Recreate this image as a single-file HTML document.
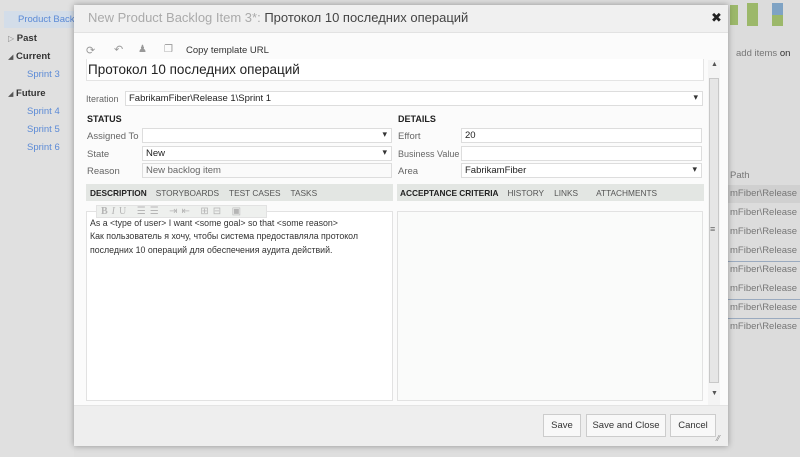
<!DOCTYPE html>
<html><head><meta charset="utf-8"><style>
*{box-sizing:border-box;margin:0;padding:0}
body{width:800px;height:457px;overflow:hidden;background:#dedede;font-family:"Liberation Sans","DejaVu Sans",sans-serif;font-size:9.5px;color:#222;position:relative}
div{white-space:nowrap}
.a{position:absolute}
.nav{color:#5b8ad6;font-size:9.5px}
.navh{font-weight:bold;color:#333;font-size:9.5px}
.rp{color:#777;font-size:9.5px;left:730px}
.lbl{color:#666;font-size:9.5px}
.box{position:absolute;border:1px solid #ddd;background:#fff;height:15px;font-size:9.5px;padding:1px 3px;color:#222}
.dd::after{content:"▾";position:absolute;right:4px;top:0px;font-size:9px;color:#333}
.tab{position:absolute;height:17px;background:#e3e6e3;font-size:8.3px;color:#555;padding:4px 4px}
.tab b{color:#222;margin-right:9px}
.tab span{margin-right:10px}
.btn{position:absolute;top:414px;height:23px;border:1px solid #ccc;background:#f8f8f8;font-size:9.5px;text-align:center;line-height:21px;color:#333}
</style></head><body>
<div class="a" style="left:0;top:0;width:74px;height:457px;background:#e0e0e0"></div>
<div class="a" style="left:4px;top:11px;width:72px;height:17px;background:#d3dde9"></div>
<div class="a nav" style="left:18px;top:14px">Product Backl</div>
<div class="a navh" style="left:8px;top:33px"><span style="color:#888;font-size:8px">▷</span> Past</div>
<div class="a navh" style="left:8px;top:51px"><span style="color:#555;font-size:7px">◢</span> Current</div>
<div class="a nav" style="left:27px;top:69px">Sprint 3</div>
<div class="a navh" style="left:8px;top:88px"><span style="color:#555;font-size:7px">◢</span> Future</div>
<div class="a nav" style="left:27px;top:106px">Sprint 4</div>
<div class="a nav" style="left:27px;top:124px">Sprint 5</div>
<div class="a nav" style="left:27px;top:142px">Sprint 6</div>
<div class="a" style="left:730px;top:0;width:70px;height:457px;background:#dcdcdc"></div>
<div class="a" style="left:730px;top:5px;width:8px;height:20px;background:#9cb86a"></div>
<div class="a" style="left:747px;top:3px;width:11px;height:23px;background:#9cb86a"></div>
<div class="a" style="left:772px;top:3px;width:11px;height:12px;background:#7fa3c4"></div>
<div class="a" style="left:772px;top:15px;width:11px;height:11px;background:#9cb86a"></div>
<div class="a" style="left:736px;top:48px;color:#777">add items <span style="color:#333">on</span></div>
<div class="a rp" style="top:170px">Path</div>
<div class="a" style="left:728px;top:185px;width:72px;height:18px;background:#d0d0d0"></div>
<div class="a rp" style="top:188px">mFiber\Release 1</div>
<div class="a rp" style="top:207px">mFiber\Release 1</div>
<div class="a rp" style="top:226px">mFiber\Release 1</div>
<div class="a rp" style="top:245px">mFiber\Release 1</div>
<div class="a" style="left:728px;top:261px;width:72px;height:1px;background:#9aaabf"></div>
<div class="a rp" style="top:264px">mFiber\Release 1</div>
<div class="a rp" style="top:283px">mFiber\Release 1</div>
<div class="a" style="left:728px;top:299px;width:72px;height:1px;background:#9aaabf"></div>
<div class="a rp" style="top:302px">mFiber\Release 1</div>
<div class="a" style="left:728px;top:318px;width:72px;height:1px;background:#9aaabf"></div>
<div class="a rp" style="top:321px">mFiber\Release 1</div>
<div class="a" style="left:74px;top:5px;width:654px;height:441px;background:#fbfbfb;box-shadow:0 0 6px rgba(0,0,0,.35)"></div>
<div class="a" style="left:74px;top:5px;width:654px;height:28px;background:#f0f0f0;border-bottom:1px solid #e2e2e2"></div>
<div class="a" style="left:88px;top:10px;font-size:13px;color:#aaa">New Product Backlog Item 3*: <span style="color:#444">Протокол 10 последних операций</span></div>
<div class="a" style="left:711px;top:10px;font-size:13px;font-weight:bold;color:#222">✖</div>
<div class="a" style="left:86px;top:44px;color:#999;font-size:11px">⟳</div>
<div class="a" style="left:114px;top:43px;color:#999;font-size:11px">↶</div>
<div class="a" style="left:138px;top:44px;color:#999;font-size:10px">♟</div>
<div class="a" style="left:164px;top:44px;color:#999;font-size:10px">❐</div>
<div class="a" style="left:186px;top:45px;font-size:9.5px;color:#333">Copy template URL</div>
<div class="a" style="left:86px;top:59px;width:618px;height:22px;border:1px solid #e4e4e4;border-top:none;background:#fff"></div>
<div class="a" style="left:88px;top:62px;font-size:13.5px;color:#222">Протокол 10 последних операций</div>
<div class="a" style="left:708px;top:60px;width:12px;height:345px;background:#f4f4f4"></div>
<div class="a" style="left:709px;top:78px;width:10px;height:305px;background:#e6e6e6;border:1px solid #c8c8c8"></div>
<div class="a" style="left:711px;top:61px;font-size:7px;color:#555">▲</div>
<div class="a" style="left:711px;top:390px;font-size:7px;color:#555">▼</div>
<div class="a" style="left:710px;top:224px;font-size:9px;color:#666">≡</div>
<div class="a lbl" style="left:86px;top:94px;font-size:9px">Iteration</div>
<div class="box dd" style="left:125px;top:91px;width:578px">FabrikamFiber\Release 1\Sprint 1</div>
<div class="a" style="left:87px;top:114px;font-weight:bold;font-size:9px">STATUS</div>
<div class="a" style="left:398px;top:114px;font-weight:bold;font-size:9px">DETAILS</div>
<div class="a lbl" style="left:87px;top:131px">Assigned To</div>
<div class="box dd" style="left:142px;top:128px;width:250px"></div>
<div class="a lbl" style="left:87px;top:149px">State</div>
<div class="box dd" style="left:142px;top:146px;width:250px">New</div>
<div class="a lbl" style="left:87px;top:166px">Reason</div>
<div class="box" style="left:142px;top:163px;width:250px;color:#666;background:#fafafa">New backlog item</div>
<div class="a lbl" style="left:398px;top:131px">Effort</div>
<div class="box" style="left:461px;top:128px;width:241px">20</div>
<div class="a lbl" style="left:398px;top:149px;font-size:9px">Business Value</div>
<div class="box" style="left:461px;top:146px;width:241px"></div>
<div class="a lbl" style="left:398px;top:166px">Area</div>
<div class="box dd" style="left:461px;top:163px;width:241px">FabrikamFiber</div>
<div class="tab" style="left:86px;top:184px;width:307px"><b>DESCRIPTION</b><span>STORYBOARDS</span><span>TEST CASES</span><span>TASKS</span></div>
<div class="tab" style="left:397px;top:184px;width:307px;padding-left:3px"><b>ACCEPTANCE CRITERIA</b><span>HISTORY</span><span>LINKS</span><span style="margin-left:8px">ATTACHMENTS</span></div>
<div class="a" style="left:86px;top:211px;width:307px;height:190px;border:1px solid #e2e2e2;background:#fff"></div>
<div class="a" style="left:397px;top:211px;width:306px;height:190px;border:1px solid #e2e2e2;background:#fafbfa"></div>
<div class="a" style="left:96px;top:205px;width:171px;height:13px;background:#eef0ee;border:1px solid #e2e2e2;color:#b5b5b5;font-size:10px;padding-left:4px;letter-spacing:4px;font-family:'Liberation Serif',serif"><b>B</b><i>I</i>U ☰☰ ⇥⇤ ⊞⊟ ▣</div>
<div class="a" style="left:90px;top:217px;font-size:8.8px;line-height:13.3px;color:#333">As a &lt;type of user&gt; I want &lt;some goal&gt; so that &lt;some reason&gt;<br>Как пользователь я хочу, чтобы система предоставляла протокол<br>последних 10 операций для обеспечения аудита действий.</div>
<div class="a" style="left:74px;top:405px;width:654px;height:41px;background:#eeeeee;border-top:1px solid #e4e4e4"></div>
<div class="btn" style="left:543px;width:38px">Save</div>
<div class="btn" style="left:586px;width:80px">Save and Close</div>
<div class="btn" style="left:670px;width:46px">Cancel</div>
<div class="a" style="left:717px;top:434px;font-size:8px;color:#888">⁄⁄</div>
</body></html>
